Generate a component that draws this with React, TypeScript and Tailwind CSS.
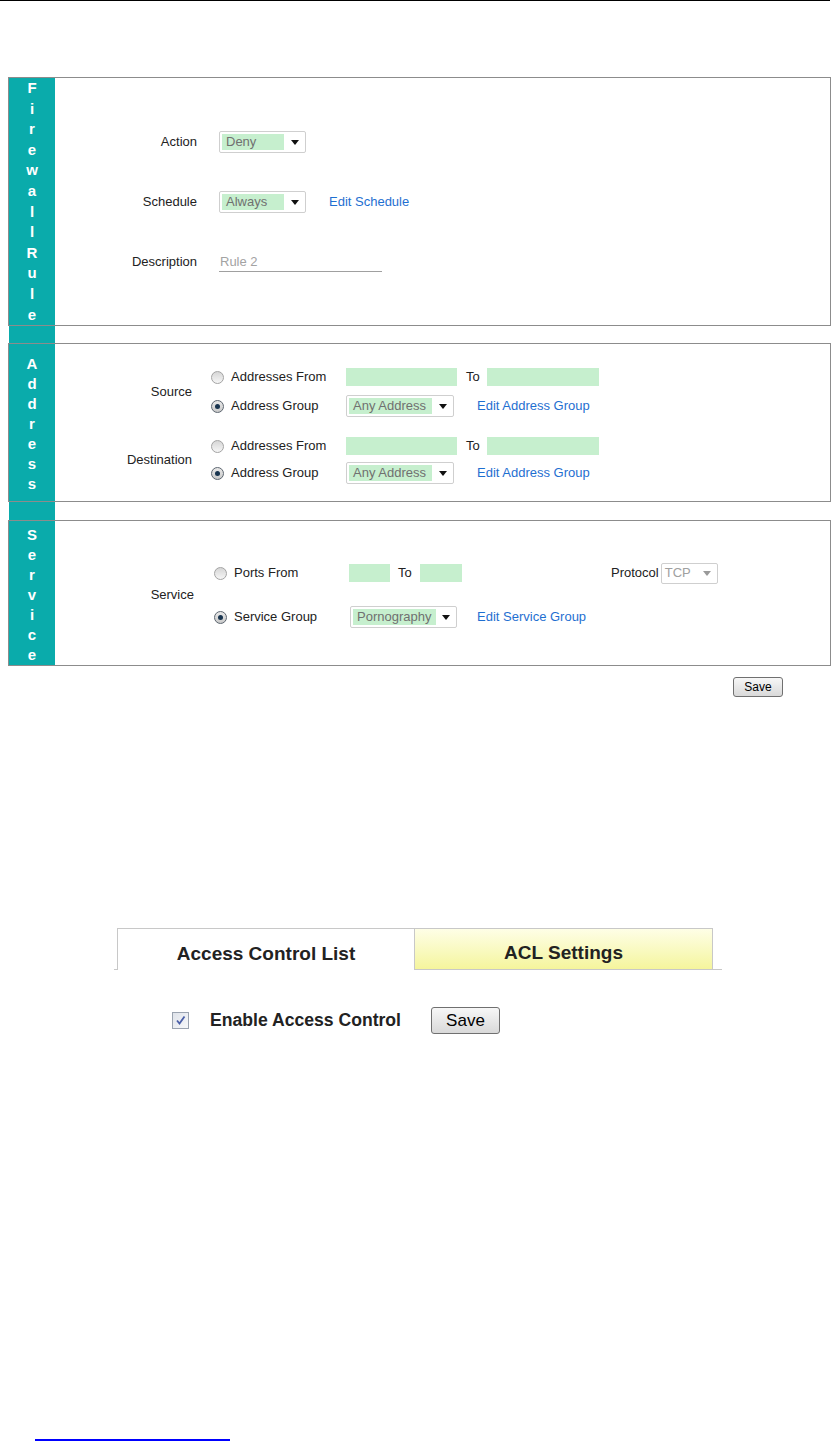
import React from 'react';

const TEAL = 'bg-[#0aabab]';

function Letters({ text, leading }: { text: string; leading: string }) {
  return (
    <div className={`w-[46px] ${TEAL} flex flex-col items-center text-white font-bold text-[15px] ${leading}`}>
      {text.split('').map((c, i) => (
        <span key={i}>{c}</span>
      ))}
    </div>
  );
}

function Arrow({ gray }: { gray?: boolean }) {
  return (
    <svg width="8" height="5" viewBox="0 0 8 5" className="shrink-0">
      <polygon points="0,0 8,0 4,5" fill={gray ? '#9a9a9a' : '#111'} />
    </svg>
  );
}

function Select({ value, w, inner }: { value: string; w: string; inner: string }) {
  return (
    <div className={`${w} h-[22px] flex items-center border border-[#cfcfcf] rounded-[2px] bg-white pl-[2px] pr-[6px]`}>
      <div className={`${inner} h-[16px] bg-[#c6efce] text-[#707070] text-[13px] leading-[16px] pl-[4px]`}>{value}</div>
      <div className="flex-1 flex justify-end">
        <Arrow />
      </div>
    </div>
  );
}

function Radio({ checked }: { checked?: boolean }) {
  return (
    <span
      className={`w-[13px] h-[13px] rounded-full border flex items-center justify-center shrink-0 ${
        checked ? 'border-[#5d6670] bg-gradient-to-b from-[#e9e9e9] to-[#c9c9c9]' : 'border-[#a3a3a3] bg-gradient-to-b from-[#d6d6d6] to-[#f6f6f6]'
      }`}
    >
      {checked && <span className="w-[5px] h-[5px] rounded-full bg-[#18344f]" />}
    </span>
  );
}

const link = 'text-[#1f6fd1] text-[13px]';

export default function App() {
  return (
    <div className="w-[833px] h-[1442px] bg-white text-[#222] font-['Liberation_Sans',Arial,sans-serif] overflow-hidden">
      <div className="w-[830px] h-px bg-black" />

      <div className="ml-[8px] mt-[76px] w-[823px]">
        {/* Firewall Rule */}
        <div className="h-[249px] flex border border-[#8c8c8c]">
          <Letters text="FirewallRule" leading="leading-[20.6px]" />
          <div className="flex flex-col gap-[38px] pt-[53px] text-[13px]">
            <div className="h-[22px] flex items-center gap-[22px]">
              <div className="w-[142px] text-right">Action</div>
              <Select value="Deny" w="w-[87px]" inner="w-[62px]" />
            </div>
            <div className="h-[22px] flex items-center gap-[22px]">
              <div className="w-[142px] text-right">Schedule</div>
              <Select value="Always" w="w-[87px]" inner="w-[62px]" />
              <span className={`${link} ml-px`}>Edit Schedule</span>
            </div>
            <div className="h-[22px] flex items-center gap-[22px]">
              <div className="w-[142px] text-right">Description</div>
              <div className="w-[163px] h-[19px] border-b border-[#a0a0a0] text-[#a3a3a3] leading-[18px] pl-px">Rule 2</div>
            </div>
          </div>
        </div>
        <div className={`ml-px w-[46px] h-[17px] ${TEAL}`} />

        {/* Address */}
        <div className="h-[159px] flex border border-[#8c8c8c]">
          <div className={`w-[46px] ${TEAL} pt-[10px]`}>
            <Letters text="Address" leading="leading-[20px]" />
          </div>
          <div className="flex flex-col gap-[18px] pt-[22px] text-[13px]">
            {['Source', 'Destination'].map((label, i) => (
              <div key={label} className="flex items-center">
                <div className="w-[137px] text-right">{label}</div>
                <div className={`ml-[19px] flex flex-col ${i === 0 ? 'gap-[7px]' : 'gap-[5px]'}`}>
                  <div className="h-[22px] flex items-center">
                    <Radio />
                    <span className="ml-[7px] w-[115px]">Addresses From</span>
                    <div className="w-[111px] h-[18px] bg-[#c6efce]" />
                    <span className="ml-[9px] w-[21px]">To</span>
                    <div className="w-[112px] h-[18px] bg-[#c6efce]" />
                  </div>
                  <div className="h-[22px] flex items-center">
                    <Radio checked />
                    <span className="ml-[7px] w-[115px]">Address Group</span>
                    <Select value="Any Address" w="w-[108px]" inner="w-[83px]" />
                    <span className={`${link} ml-[23px]`}>Edit Address Group</span>
                  </div>
                </div>
              </div>
            ))}
          </div>
        </div>
        <div className={`ml-px w-[46px] h-[18px] ${TEAL}`} />

        {/* Service */}
        <div className="h-[146px] flex border border-[#8c8c8c]">
          <div className={`w-[46px] ${TEAL} pt-[4px]`}>
            <Letters text="Service" leading="leading-[20px]" />
          </div>
          <div className="flex items-center pt-[4px] text-[13px]">
            <div className="w-[139px] text-right">Service</div>
            <div className="ml-[20px] flex flex-col gap-[22px]">
              <div className="h-[22px] flex items-center">
                <Radio />
                <span className="ml-[7px] w-[115px]">Ports From</span>
                <div className="w-[41px] h-[18px] bg-[#c6efce]" />
                <span className="ml-[8px] w-[22px]">To</span>
                <div className="w-[42px] h-[18px] bg-[#c6efce]" />
                <span className="ml-[149px]">Protocol</span>
                <div className="ml-[2px] w-[57px] h-[21px] flex items-center border border-[#cfcfcf] rounded-[2px] pl-[3px] pr-[6px] text-[#a0a0a0]">
                  <span className="flex-1">TCP</span>
                  <Arrow gray />
                </div>
              </div>
              <div className="h-[22px] flex items-center">
                <Radio checked />
                <span className="ml-[7px] w-[116px]">Service Group</span>
                <Select value="Pornography" w="w-[107px]" inner="w-[83px]" />
                <span className={`${link} ml-[20px]`}>Edit Service Group</span>
              </div>
            </div>
          </div>
        </div>

        <button className="mt-[11px] ml-[725px] w-[50px] h-[20px] rounded-[3px] border border-[#707070] bg-gradient-to-b from-[#f7f7f7] to-[#d9d9d9] text-[12px] leading-[18px] text-black">
          Save
        </button>
      </div>

      {/* Tabs */}
      <div className="mt-[230px] ml-[114px] flex items-end">
        <div className="w-[3px] h-px bg-[#c8c8c8]" />
        <div className="w-[298px] h-[42px] border-l border-t border-r border-[#c8c8c8] bg-white flex items-center justify-center font-bold text-[19px] pt-[10px]">
          Access Control List
        </div>
        <div className="w-[298px] h-[42px] border-t border-r border-b border-[#c8c8c8] bg-gradient-to-b from-[#fefee6] to-[#f5f59c] flex items-center justify-center font-bold text-[19px] pt-[9px]">
          ACL Settings
        </div>
        <div className="w-[9px] h-px bg-[#c8c8c8]" />
      </div>

      {/* Enable */}
      <div className="mt-[37px] ml-[172px] h-[27px] flex items-center">
        <span className="w-[17px] h-[17px] border border-[#9aa3b0] bg-gradient-to-br from-[#dfe3ea] to-[#f7f8fa] flex items-center justify-center">
          <svg width="11" height="11" viewBox="0 0 11 11">
            <path d="M2 5.5 L4.5 8.5 L9.5 1.5" stroke="#4a5fa8" strokeWidth="1.8" fill="none" />
          </svg>
        </span>
        <span className="ml-[21px] font-bold text-[17.6px]">Enable Access Control</span>
        <button className="ml-[30px] w-[69px] h-[27px] rounded-[3px] border border-[#707070] bg-gradient-to-b from-[#f7f7f7] to-[#d9d9d9] text-[17px] text-black">
          Save
        </button>
      </div>

      <div className="mt-[405px] ml-[35px] w-[195px] h-[2px] bg-[#0000ff]" />
    </div>
  );
}
